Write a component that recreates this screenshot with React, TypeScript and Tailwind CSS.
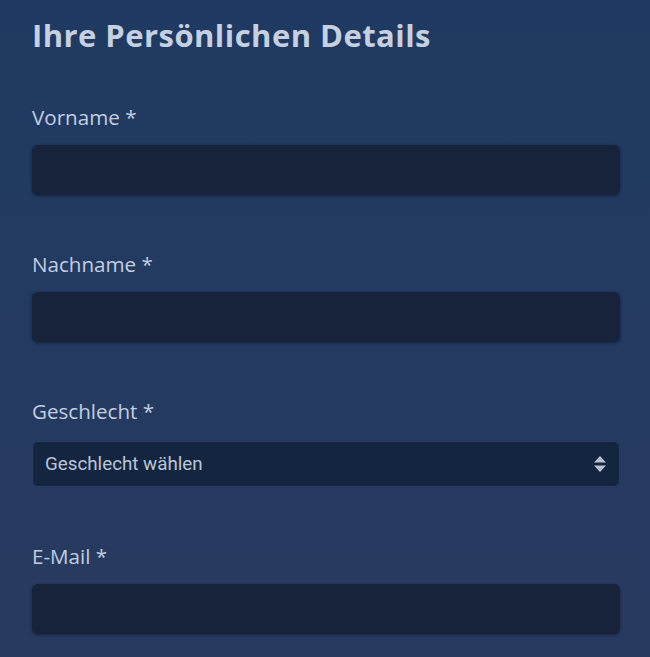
const FIELDS = [
  { label: "Vorname *", kind: "text" },
  { label: "Nachname *", kind: "text" },
  { label: "Geschlecht *", kind: "select" },
  { label: "E-Mail *", kind: "text" },
] as const;

function Field({ label, kind }: { label: string; kind: "text" | "select" }) {
  return (
    <div className="flex flex-col">
      <label className="text-[20.6px] leading-[26px] text-[#c3cee0]">{label}</label>
      {kind === "select" ? (
        <div className="mt-[17px] flex h-[46px] items-center justify-between rounded-md border border-[#2a3d5f] bg-[#14253f] pr-[12px] pl-[12px]">
          <span className="font-['Roboto',sans-serif] text-[18.8px] text-[#b9c5d8]">
            Geschlecht wählen
          </span>
          <svg width="14" height="18" viewBox="0 0 14 18" aria-hidden="true">
            <path d="M7 1 L13 7.5 H1 Z" fill="#b7c2d4" />
            <path d="M7 17 L13 10.5 H1 Z" fill="#b7c2d4" />
          </svg>
        </div>
      ) : (
        <div className="mt-[15px] h-[50px] rounded-md bg-[#17233a] shadow-[0_1px_3px_rgba(5,10,25,0.5)]" />
      )}
    </div>
  );
}

export default function App() {
  return (
    <div className="min-h-[657px] w-full bg-gradient-to-b from-[#1f3a62] to-[#283a60] pt-[16px] pr-[30px] pl-[32px] font-['Open_Sans',sans-serif]">
      <h1 className="text-[31px] leading-[38px] font-bold tracking-[0.45px] text-[#c6d0e0]">
        Ihre Persönlichen Details
      </h1>
      <div className="mt-[50px] flex flex-col gap-[56px]">
        {FIELDS.map((f) => (
          <Field key={f.label} label={f.label} kind={f.kind} />
        ))}
      </div>
    </div>
  );
}
